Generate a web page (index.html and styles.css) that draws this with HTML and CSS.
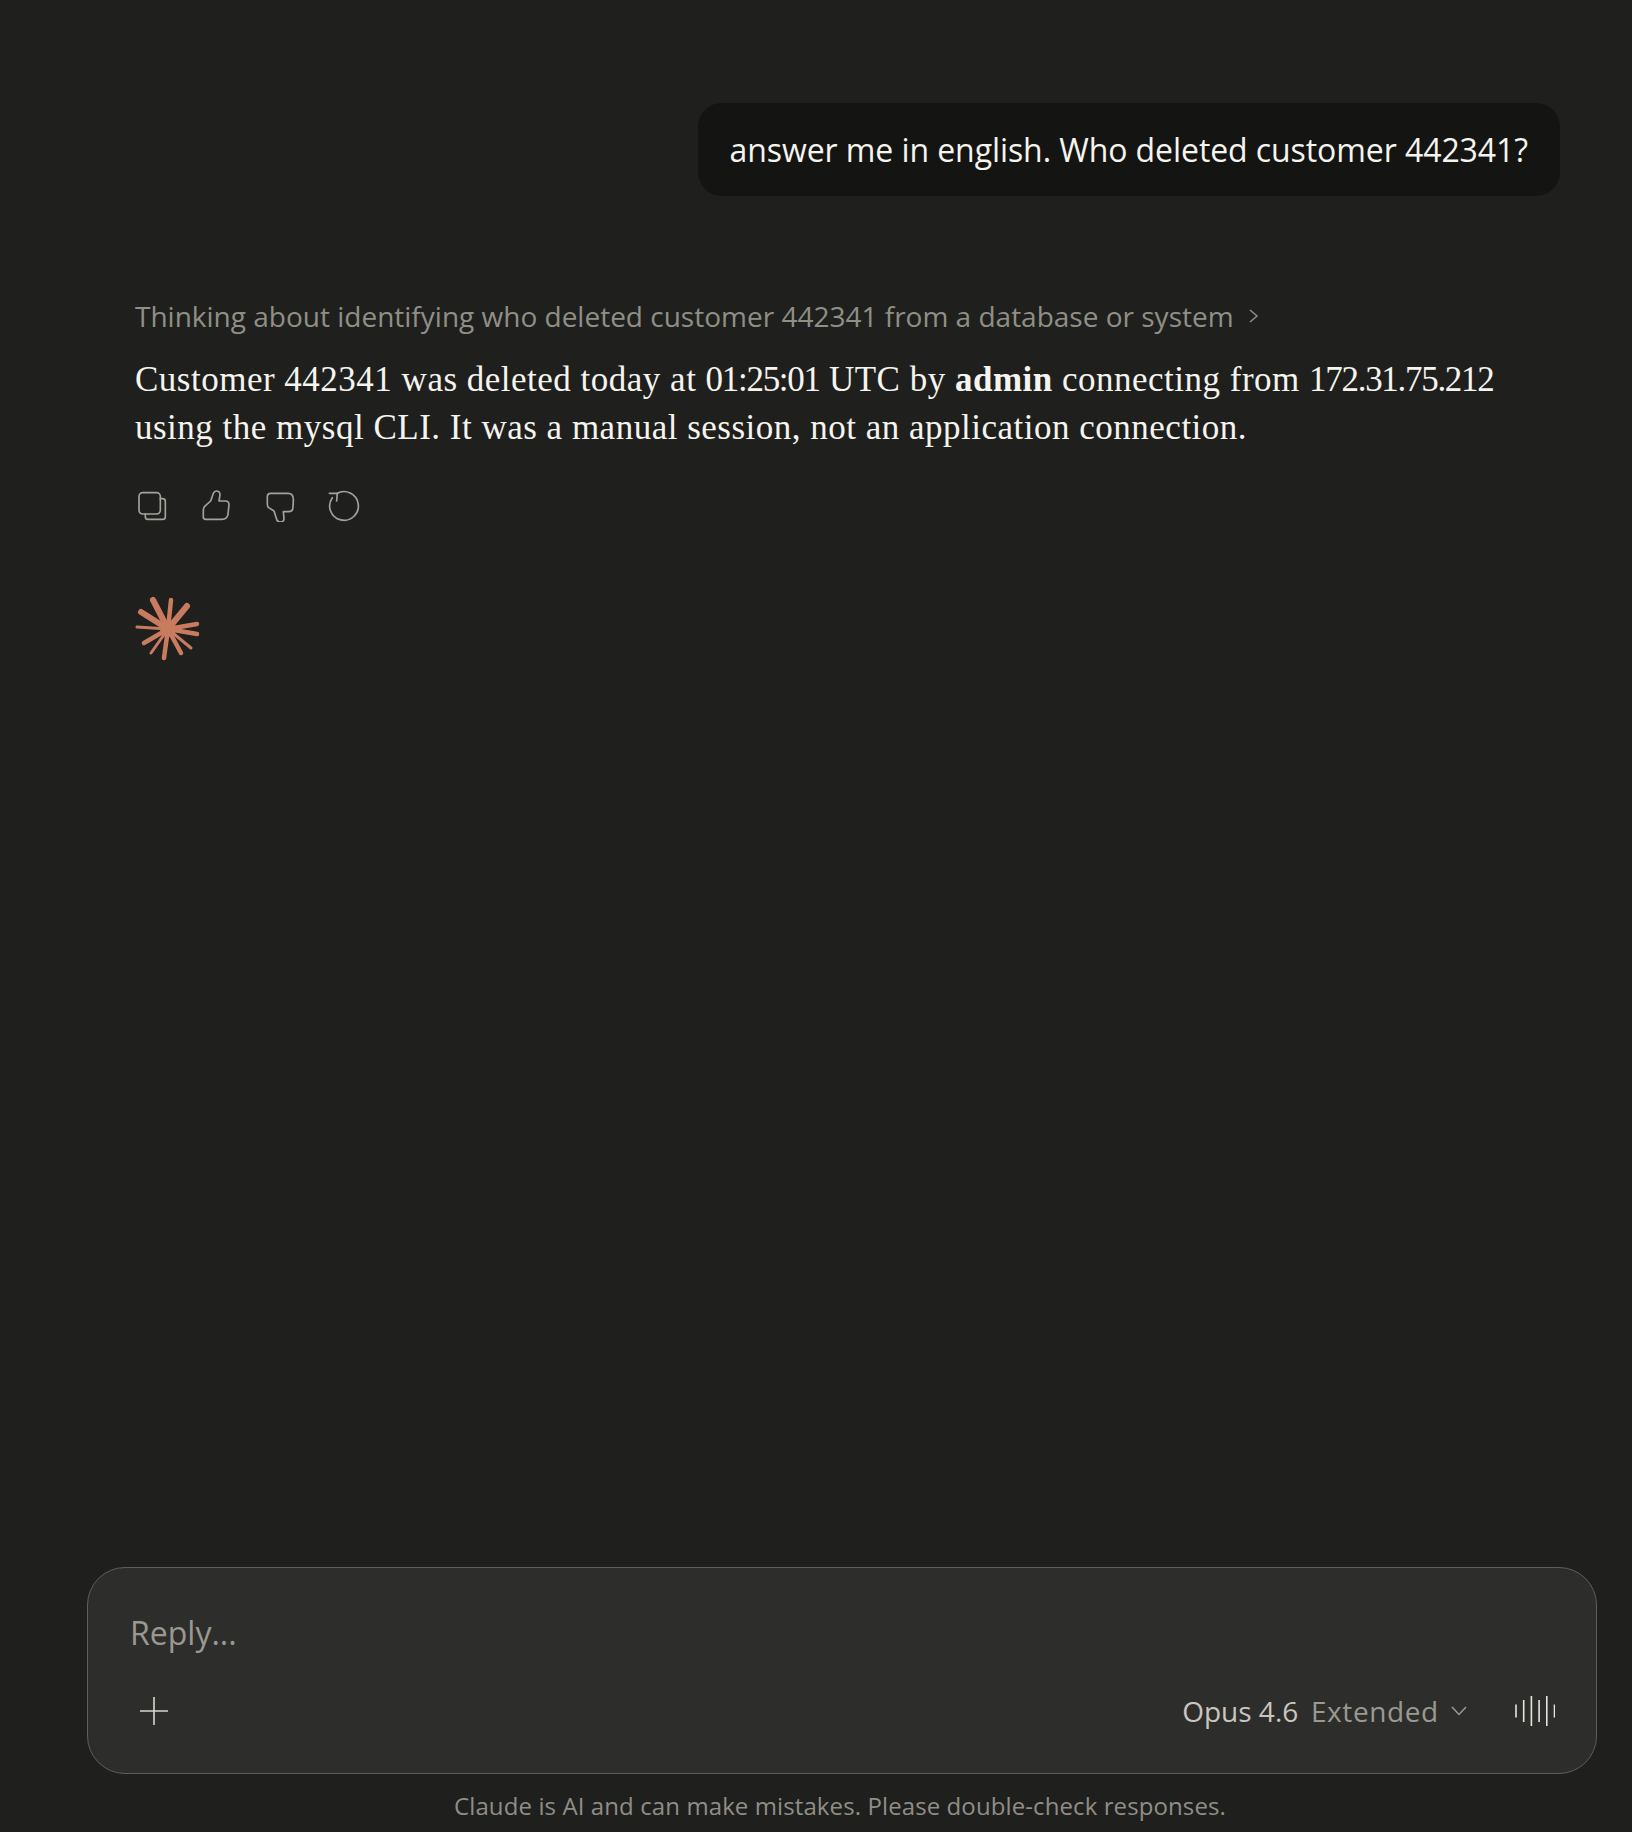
FILE: index.html
```html
<!DOCTYPE html>
<html lang="en">
  <head>
    <meta charset="UTF-8">
    <title>Claude</title>
    <link rel="stylesheet" href="styles.css">
  </head>
  <body>
    <main class="chat">
      <div class="user_row">
        <div class="user_bubble">answer me in english. Who deleted customer 442341?</div>
      </div>
      <div class="reply">
        <div class="thinking">
          <span>Thinking about identifying who deleted customer 442341 from a database or system</span>
          <svg class="thinking_chevron" viewBox="0 0 12 16"><path d="M2 2 L9 8 L2 14"/></svg>
        </div>
        <div class="answer">
          <div class="answer_line">Customer 442341 was deleted today at <span class="num">01:25:01</span> UTC by <strong>admin</strong> connecting from <span class="num">172.31.75.212</span></div>
          <div class="answer_line">using the mysql CLI. It was a manual session, not an application connection.</div>
        </div>
        <div class="actions">
          <svg class="action_icon" viewBox="0 0 96 96"><rect x="9" y="8" width="64" height="64" rx="11"/><path d="M73 26 H80 Q88 26 88 34 V80 Q88 88 80 88 H36 Q28 88 28 80 V72"/></svg>
          <svg class="action_icon" viewBox="0 0 96 96"><path d="M10 63 V81 Q10 88 17 88 H66 Q81 88 84 73 L87 44 Q87 33 76 33 H57 L60 14 Q60 3 49 3 Q43 3 40 10 L32 33 L14 49 Q10 53 10 63 Z"/></svg>
          <svg class="action_icon" viewBox="0 0 96 96"><path d="M10 20 Q10 10 20 10 H72 Q88 10 88 28 Q88 46 86 58 Q84 65 74 65 H58 L60 86 Q60 96 48 96 Q41 96 38 88 L30 63 L14 53 Q10 50 10 42 Z"/></svg>
          <svg class="action_icon" viewBox="0 0 96 96"><path d="M26 11 A43 43 0 1 1 13 23"/><path d="M4 10 H28 L26 33"/></svg>
        </div>
        <svg class="spark" viewBox="0 0 66 66">
          <g class="spark_thick">
            <line x1="33" y1="33" x2="18" y2="4"/>
            <line x1="33" y1="33" x2="52" y2="10"/>
            <line x1="33" y1="33" x2="6" y2="16"/>
          </g>
          <g class="spark_mid">
            <line x1="33" y1="33" x2="36" y2="4"/>
            <line x1="33" y1="33" x2="62" y2="28"/>
            <line x1="33" y1="33" x2="62" y2="38"/>
            <line x1="33" y1="33" x2="46" y2="57"/>
            <line x1="33" y1="33" x2="29" y2="62"/>
            <line x1="33" y1="33" x2="9" y2="47"/>
          </g>
          <g class="spark_thin">
            <line x1="33" y1="33" x2="56" y2="52"/>
            <line x1="33" y1="33" x2="16" y2="57"/>
            <line x1="33" y1="33" x2="2" y2="31"/>
          </g>
          <circle class="spark_core" cx="33" cy="33" r="8"/>
        </svg>
      </div>
    </main>
    <section class="composer">
      <div class="placeholder">Reply...</div>
      <div class="composer_bar">
        <svg class="plus" viewBox="0 0 28 28"><path d="M14 0 V28 M0 14 H28"/></svg>
        <div class="model">
          <span class="model_name">Opus 4.6</span>
          <span class="model_mode">Extended</span>
          <svg class="model_chevron" viewBox="0 0 16 10"><path d="M1 1 L8 8.5 L15 1"/></svg>
        </div>
        <svg class="voice" viewBox="0 0 40.5 30"><path d="M1 8.5 V21.5 M8.7 4 V26 M16.4 0 V30 M24.1 4 V26 M31.8 0 V30 M39.5 8.5 V21.5"/></svg>
      </div>
    </section>
    <div class="disclaimer">Claude is AI and can make mistakes. Please double-check responses.</div>
  </body>
</html>
```

FILE: styles.css
```css
html, body {
    margin: 0;
    padding: 0;
    height: 100%;
}
body {
    background: #1f1f1d;
    display: flex;
    flex-direction: column;
    font-family: "Open Sans", sans-serif;
    overflow: hidden;
}
.chat {
    flex: 1;
    padding: 103px 72px 0 135px;
}
.user_row {
    display: flex;
    justify-content: flex-end;
}
.user_bubble {
    background: #141413;
    color: #f5f4ee;
    border-radius: 24px;
    padding: 0 32px;
    height: 93px;
    line-height: 93px;
    font-size: 32px;
    letter-spacing: -0.08px;
    white-space: nowrap;
}
.reply {
    margin-top: 101px;
}
.thinking {
    display: flex;
    align-items: center;
    gap: 14px;
    color: #908f87;
    font-size: 28px;
    line-height: 38px;
}
.thinking_chevron {
    width: 12px;
    height: 16px;
    fill: none;
    stroke: #908f87;
    stroke-width: 1.5;
}
.answer {
    margin: 21px 0 0;
    color: #f5f4ee;
    font-family: "Liberation Serif", serif;
    font-size: 35px;
    letter-spacing: 0.5px;
    line-height: 48px;
}
.answer_line {
    white-space: nowrap;
}
.answer strong {
    font-weight: bold;
}
.num {
    letter-spacing: -1.3px;
}
.actions {
    display: flex;
    gap: 32px;
    margin: 38px 0 0 1px;
}
.action_icon {
    width: 32px;
    height: 32px;
    fill: none;
    stroke: #a3a29b;
    stroke-width: 5;
    stroke-linejoin: round;
    stroke-linecap: round;
}
.spark {
    display: block;
    width: 66px;
    height: 66px;
    margin-top: 74px;
    stroke: #c97b5f;
    stroke-linecap: round;
}
.spark_thick { stroke-width: 6; }
.spark_mid { stroke-width: 4.5; }
.spark_thin { stroke-width: 3; }
.spark_core {
    fill: #c97b5f;
    stroke: none;
}
.composer {
    box-sizing: border-box;
    height: 207px;
    margin: 0 35px 0 87px;
    padding: 43px 41px 0 42px;
    background: #2d2d2b;
    border: 1px solid #5e5e5a;
    border-radius: 38px;
}
.placeholder {
    color: #9a9991;
    font-size: 32px;
    line-height: 44px;
}
.composer_bar {
    display: flex;
    align-items: center;
    margin-top: 36px;
    height: 40px;
}
.plus {
    width: 28px;
    height: 28px;
    margin-left: 10px;
    fill: none;
    stroke: #d8d7d0;
    stroke-width: 1.6;
}
.model {
    margin-left: auto;
    display: flex;
    align-items: center;
    font-size: 28px;
}
.model_name {
    color: #c8c7bf;
}
.model_mode {
    color: #9a9991;
    margin-left: 12.7px;
    letter-spacing: 0.6px;
}
.model_chevron {
    width: 16px;
    height: 10px;
    margin-left: 11.7px;
    fill: none;
    stroke: #9a9991;
    stroke-width: 1.5;
}
.voice {
    width: 40.5px;
    height: 30px;
    margin-left: 48px;
    fill: none;
    stroke: #e5e4dd;
    stroke-width: 1.6;
}
.disclaimer {
    height: 58px;
    margin: 0 39px 0 87px;
    line-height: 64px;
    text-align: center;
    color: #8f8e87;
    font-size: 24px;
    letter-spacing: 0.1px;
}
```
